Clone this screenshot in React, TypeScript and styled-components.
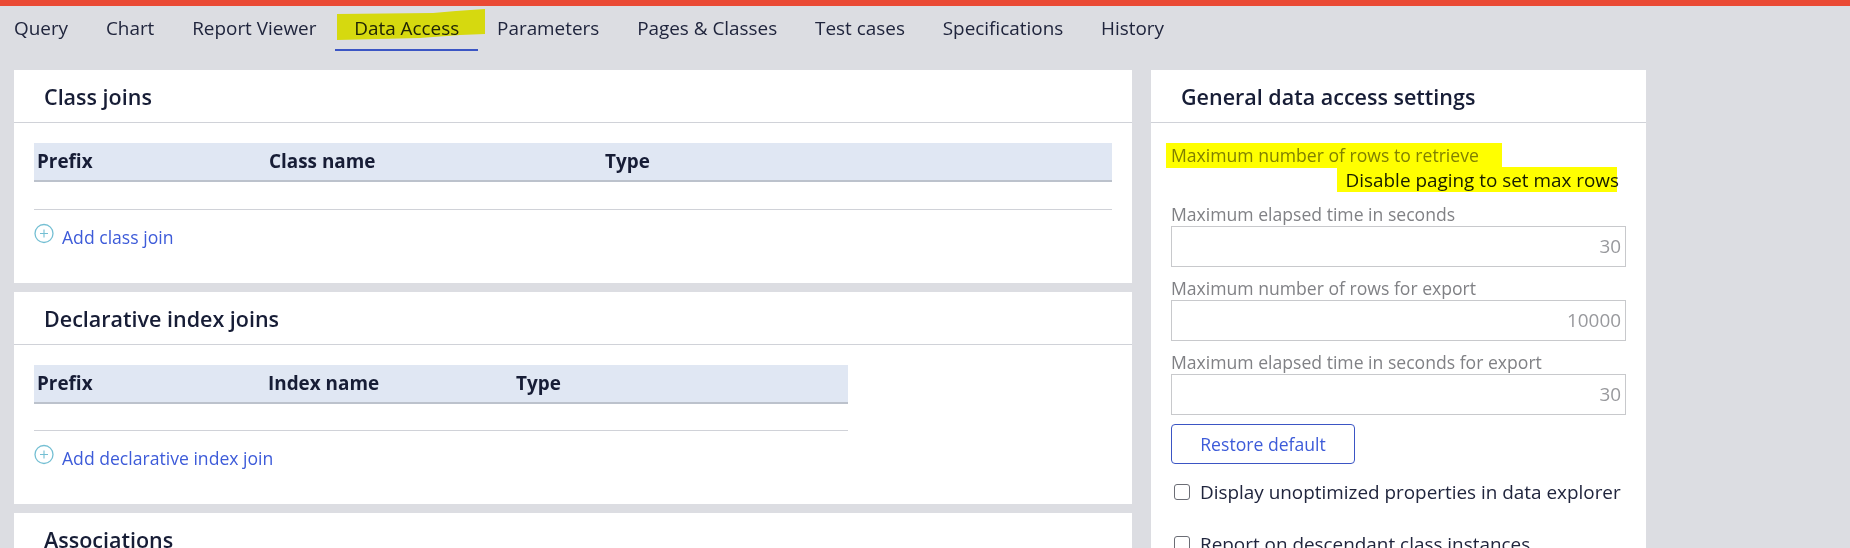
import React from "react";
import styled, { createGlobalStyle } from "styled-components";

const Global = createGlobalStyle`
  *, *::before, *::after { box-sizing: border-box; }
  html, body { margin: 0; padding: 0; height: 548px; overflow: hidden; background: #dcdde2; }
  body { font-family: "Open Sans", "Noto Sans", sans-serif; color: #171d36; }
`;

const Page = styled.div`
  width: 1850px;
  height: 548px;
  overflow: hidden;
  background: #dcdde2;
`;

const TopBar = styled.div`
  height: 6px;
  background: #ea4a35;
`;

const TabBar = styled.nav`
  display: flex;
  align-items: stretch;
  height: 45px;
  padding-left: 14px;
  gap: 37.85px;
`;

const Tab = styled.a<{ $active?: boolean }>`
  position: relative;
  display: block;
  font-size: 18.9px;
  line-height: 44px;
  color: #20253d;
  white-space: nowrap;
  &::after {
    content: "";
    display: ${(p) => (p.$active ? "block" : "none")};
    position: absolute;
    left: -19px;
    right: -19px;
    bottom: 0;
    height: 2px;
    background: #3b55c4;
  }
`;

const Marker = styled.svg`
  position: absolute;
  left: -18px;
  top: -6px;
  width: 150px;
  height: 42px;
  mix-blend-mode: multiply;
  pointer-events: none;
`;

const Columns = styled.div`
  display: flex;
  align-items: flex-start;
  gap: 19px;
  padding: 19px 0 0 14px;
`;

const LeftColumn = styled.div`
  width: 1118px;
  display: flex;
  flex-direction: column;
  gap: 9px;
`;

const Card = styled.section<{ $height?: number }>`
  background: #fff;
  height: ${(p) => (p.$height ? `${p.$height}px` : "auto")};
`;

const RightCard = styled(Card)`
  width: 495px;
  height: 478px;
`;

const CardTitle = styled.h2`
  margin: 0;
  height: 53px;
  padding-left: 30px;
  border-bottom: 1px solid #d0d2d8;
  font-size: 21.5px;
  font-weight: 600;
  line-height: 53px;
  color: #171d36;
`;

const CardBody = styled.div`
  padding: 20px 20px 0;
`;

const Table = styled.div<{ $width: number }>`
  width: ${(p) => p.$width}px;
`;

const HeaderRow = styled.div<{ $cols: string }>`
  display: grid;
  grid-template-columns: ${(p) => p.$cols};
  height: 39px;
  padding-left: 3px;
  background: #e0e7f3;
  border-bottom: 2px solid #bcc2cc;
  font-size: 18.9px;
  font-weight: 700;
  line-height: 36px;
  color: #171d36;
`;

const EmptyRow = styled.div<{ $height: number }>`
  height: ${(p) => p.$height}px;
  border-bottom: 1px solid #d0d2d8;
`;

const AddRow = styled.a`
  display: flex;
  align-items: flex-start;
  gap: 8px;
  margin-top: 13px;
  font-size: 17.6px;
  line-height: 29px;
  color: #3d5bd9;
  svg { flex: none; }
`;

const PlusIcon = () => (
  <svg width="20" height="21" viewBox="0 0 20 21" fill="none" stroke="#74bfd3" strokeWidth="1.3">
    <circle cx="10" cy="10.5" r="9" />
    <path d="M10 6.5v8M6 10.5h8" strokeWidth="1.1" />
  </svg>
);

const SettingsBody = styled.div`
  position: relative;
  padding: 20px 20px 0;
`;

const Highlighted = styled.svg`
  position: absolute;
  left: 15px;
  top: 20px;
  width: 452px;
  height: 50px;
  mix-blend-mode: multiply;
  pointer-events: none;
`;

const FieldLabel = styled.div`
  font-size: 17.6px;
  line-height: 24px;
  color: #808185;
  white-space: nowrap;
`;

const Notice = styled.div`
  font-size: 18.9px;
  line-height: 26px;
  color: #171d36;
  text-align: right;
  margin: 0 7px 0 0;
  height: 35px;
  white-space: nowrap;
`;

const Field = styled.div`
  margin-bottom: 9px;
`;

const InputBox = styled.div`
  height: 41px;
  border: 1px solid #c8c9cc;
  padding: 0 4px;
  text-align: right;
  font-size: 18.9px;
  line-height: 39px;
  color: #98999d;
`;

const RestoreButton = styled.button`
  display: block;
  width: 184px;
  height: 40px;
  padding: 0;
  background: #fff;
  border: 1px solid #3b55c4;
  border-radius: 4px;
  font-family: inherit;
  font-size: 17.6px;
  color: #3d5bd9;
`;

const CheckRow = styled.label<{ $gap?: number }>`
  display: flex;
  align-items: center;
  gap: 10px;
  height: 24px;
  margin-top: ${(p) => p.$gap ?? 0}px;
  padding-left: 3px;
  font-size: 18.9px;
  white-space: nowrap;
  color: #20253d;
`;

const CheckBox = styled.span`
  flex: none;
  width: 16px;
  height: 16px;
  border: 1.5px solid #6b6d75;
  border-radius: 3px;
`;

const tabs = ["Query", "Chart", "Report Viewer", "Data Access", "Parameters", "Pages & Classes", "Test cases", "Specifications", "History"];

export default function App() {
  return (
    <Page>
      <Global />
      <TopBar />
      <TabBar>
        {tabs.map((t) => (
          <Tab key={t} $active={t === "Data Access"}>
            {t}
            {t === "Data Access" && (
              <Marker viewBox="0 0 150 42">
                <path d="M1 14 L97 13 L120 11 L149 9 L149 34 L124 35 L84 38 L1 40 Z" fill="#f9fb10" />
              </Marker>
            )}
          </Tab>
        ))}
      </TabBar>
      <Columns>
        <LeftColumn>
          <Card $height={213}>
            <CardTitle>Class joins</CardTitle>
            <CardBody>
              <Table $width={1078}>
                <HeaderRow $cols="232px 336px 1fr">
                  <span>Prefix</span>
                  <span>Class name</span>
                  <span>Type</span>
                </HeaderRow>
                <EmptyRow $height={28} />
                <AddRow>
                  <PlusIcon />
                  Add class join
                </AddRow>
              </Table>
            </CardBody>
          </Card>
          <Card $height={212}>
            <CardTitle>Declarative index joins</CardTitle>
            <CardBody>
              <Table $width={814}>
                <HeaderRow $cols="231px 248px 1fr">
                  <span>Prefix</span>
                  <span>Index name</span>
                  <span>Type</span>
                </HeaderRow>
                <EmptyRow $height={27} />
                <AddRow>
                  <PlusIcon />
                  Add declarative index join
                </AddRow>
              </Table>
            </CardBody>
          </Card>
          <Card $height={60}>
            <CardTitle>Associations</CardTitle>
          </Card>
        </LeftColumn>
        <RightCard>
          <CardTitle>General data access settings</CardTitle>
          <SettingsBody>
            <FieldLabel>Maximum number of rows to retrieve</FieldLabel>
            <Notice>Disable paging to set max rows</Notice>
            <Highlighted viewBox="0 0 452 50">
              <path d="M0 0 H336 V24 H451 V49 H171 V25 H0 Z" fill="#ffff00" />
            </Highlighted>
            <Field>
              <FieldLabel>Maximum elapsed time in seconds</FieldLabel>
              <InputBox>30</InputBox>
            </Field>
            <Field>
              <FieldLabel>Maximum number of rows for export</FieldLabel>
              <InputBox>10000</InputBox>
            </Field>
            <Field>
              <FieldLabel>Maximum elapsed time in seconds for export</FieldLabel>
              <InputBox>30</InputBox>
            </Field>
            <RestoreButton>Restore default</RestoreButton>
            <CheckRow $gap={16}>
              <CheckBox />
              Display unoptimized properties in data explorer
            </CheckRow>
            <CheckRow $gap={28}>
              <CheckBox />
              Report on descendant class instances
            </CheckRow>
          </SettingsBody>
        </RightCard>
      </Columns>
    </Page>
  );
}
